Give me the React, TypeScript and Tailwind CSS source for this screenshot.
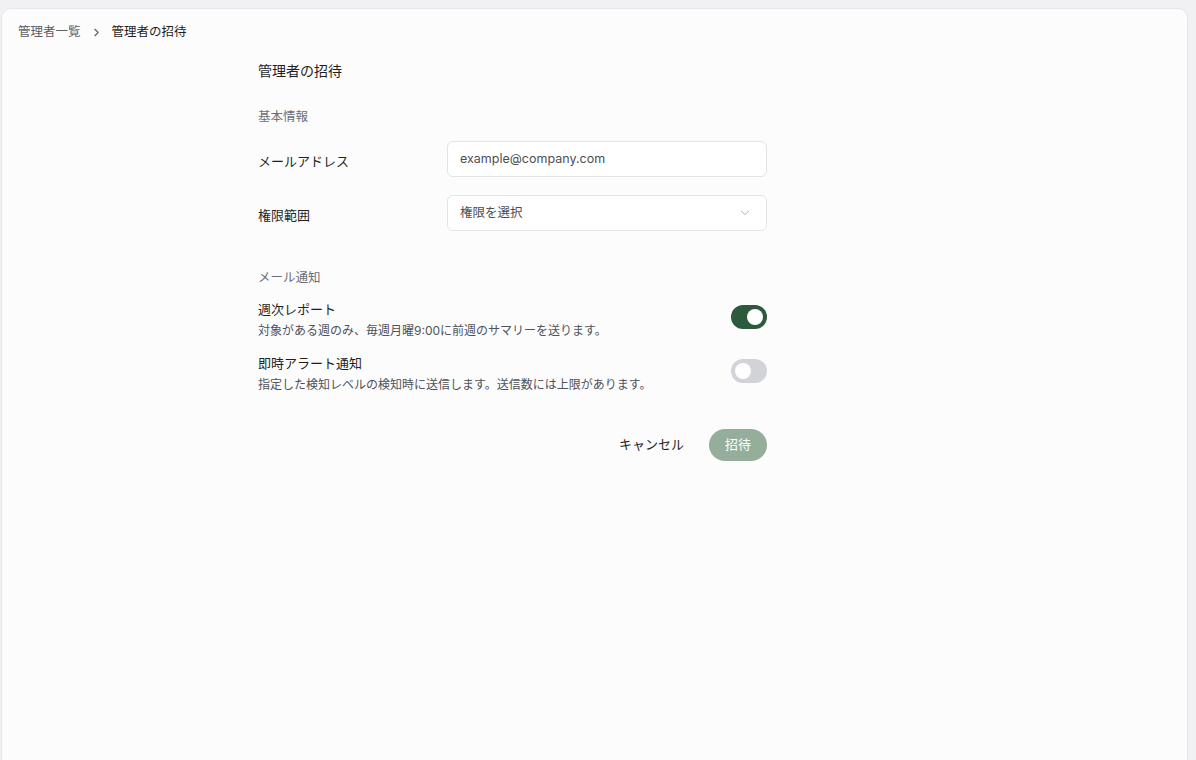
import { ChevronRight, ChevronDown } from 'lucide-react'

function Toggle({ on }: { on: boolean }) {
  return (
    <button
      type="button"
      className={
        'relative mt-[5px] h-6 w-9 shrink-0 rounded-full ' + (on ? 'bg-[#2d5a3d]' : 'bg-[#d1d3d8]')
      }
    >
      <span
        className={
          'absolute top-[4px] h-4 w-4 rounded-full bg-white ' + (on ? 'left-[16px]' : 'left-[4px]')
        }
      />
    </button>
  )
}

export default function App() {
  return (
    <div
      className="min-h-screen bg-[#f1f1f3] pl-[1px] pr-[8px] pt-[8px] text-[#1f1f1f]"
      style={{ fontFamily: 'Inter, "Noto Sans CJK JP", sans-serif' }}
    >
      <div className="min-h-[760px] rounded-tl-[10px] rounded-tr-[10px] border border-[#e6e6e8] bg-[#fcfcfc]">
        {/* breadcrumb */}
        <nav className="flex items-center gap-[9px] px-[16px] pt-[13px] text-[12.5px] leading-[20px]">
          <span className="text-[#5b5f66]">管理者一覧</span>
          <ChevronRight className="h-[13px] w-[13px] text-[#5b5f66]" strokeWidth={2} />
          <span className="text-[#1f1f1f]">管理者の招待</span>
        </nav>

        <div className="ml-[256px] w-[509px] pt-[18px]">
          <h1 className="text-[14px] leading-[22px]">管理者の招待</h1>

          <h2 className="mt-[25px] text-[12.5px] leading-[20px] text-[#6b6f76]">基本情報</h2>

          <div className="mt-[14px] flex flex-col gap-[18px]">
            <div className="flex items-center">
              <label className="w-[189px] pt-[4px] text-[13px] leading-[20px]">メールアドレス</label>
              <div className="flex h-[36px] w-[320px] items-center rounded-[6px] border border-[#e3e4e7] bg-white px-[12px] text-[12.5px] text-[#4b4f56]">
                example@company.com
              </div>
            </div>
            <div className="flex items-center">
              <label className="w-[189px] pt-[4px] text-[13px] leading-[20px]">権限範囲</label>
              <div className="flex h-[36px] w-[320px] items-center justify-between rounded-[6px] border border-[#e3e4e7] bg-white pl-[12px] pr-[14px] text-[12.5px] text-[#4b4f56]">
                <span>権限を選択</span>
                <ChevronDown className="h-[14px] w-[14px] text-[#a3a6ad]" strokeWidth={1.5} />
              </div>
            </div>
          </div>

          <h2 className="mt-[37px] text-[12.5px] leading-[20px] text-[#6b6f76]">メール通知</h2>

          <div className="mt-[12px] flex flex-col gap-[14px]">
            <div className="flex items-start justify-between">
              <div>
                <div className="text-[13px] leading-[19px]">週次レポート</div>
                <div className="mt-[2px] text-[12px] leading-[19px] text-[#4e525a]">
                  対象がある週のみ、毎週月曜9:00に前週のサマリーを送ります。
                </div>
              </div>
              <Toggle on />
            </div>
            <div className="flex items-start justify-between">
              <div>
                <div className="text-[13px] leading-[19px]">即時アラート通知</div>
                <div className="mt-[2px] text-[12px] leading-[19px] text-[#4e525a]">
                  指定した検知レベルの検知時に送信します。送信数には上限があります。
                </div>
              </div>
              <Toggle on={false} />
            </div>
          </div>

          <div className="mt-[35px] flex items-center justify-end gap-[25px]">
            <button type="button" className="text-[13px] text-[#1f1f1f]">
              キャンセル
            </button>
            <button
              type="button"
              className="h-[32px] w-[58px] rounded-full bg-[#95ae9c] text-[13px] text-white"
            >
              招待
            </button>
          </div>
        </div>
      </div>
    </div>
  )
}
